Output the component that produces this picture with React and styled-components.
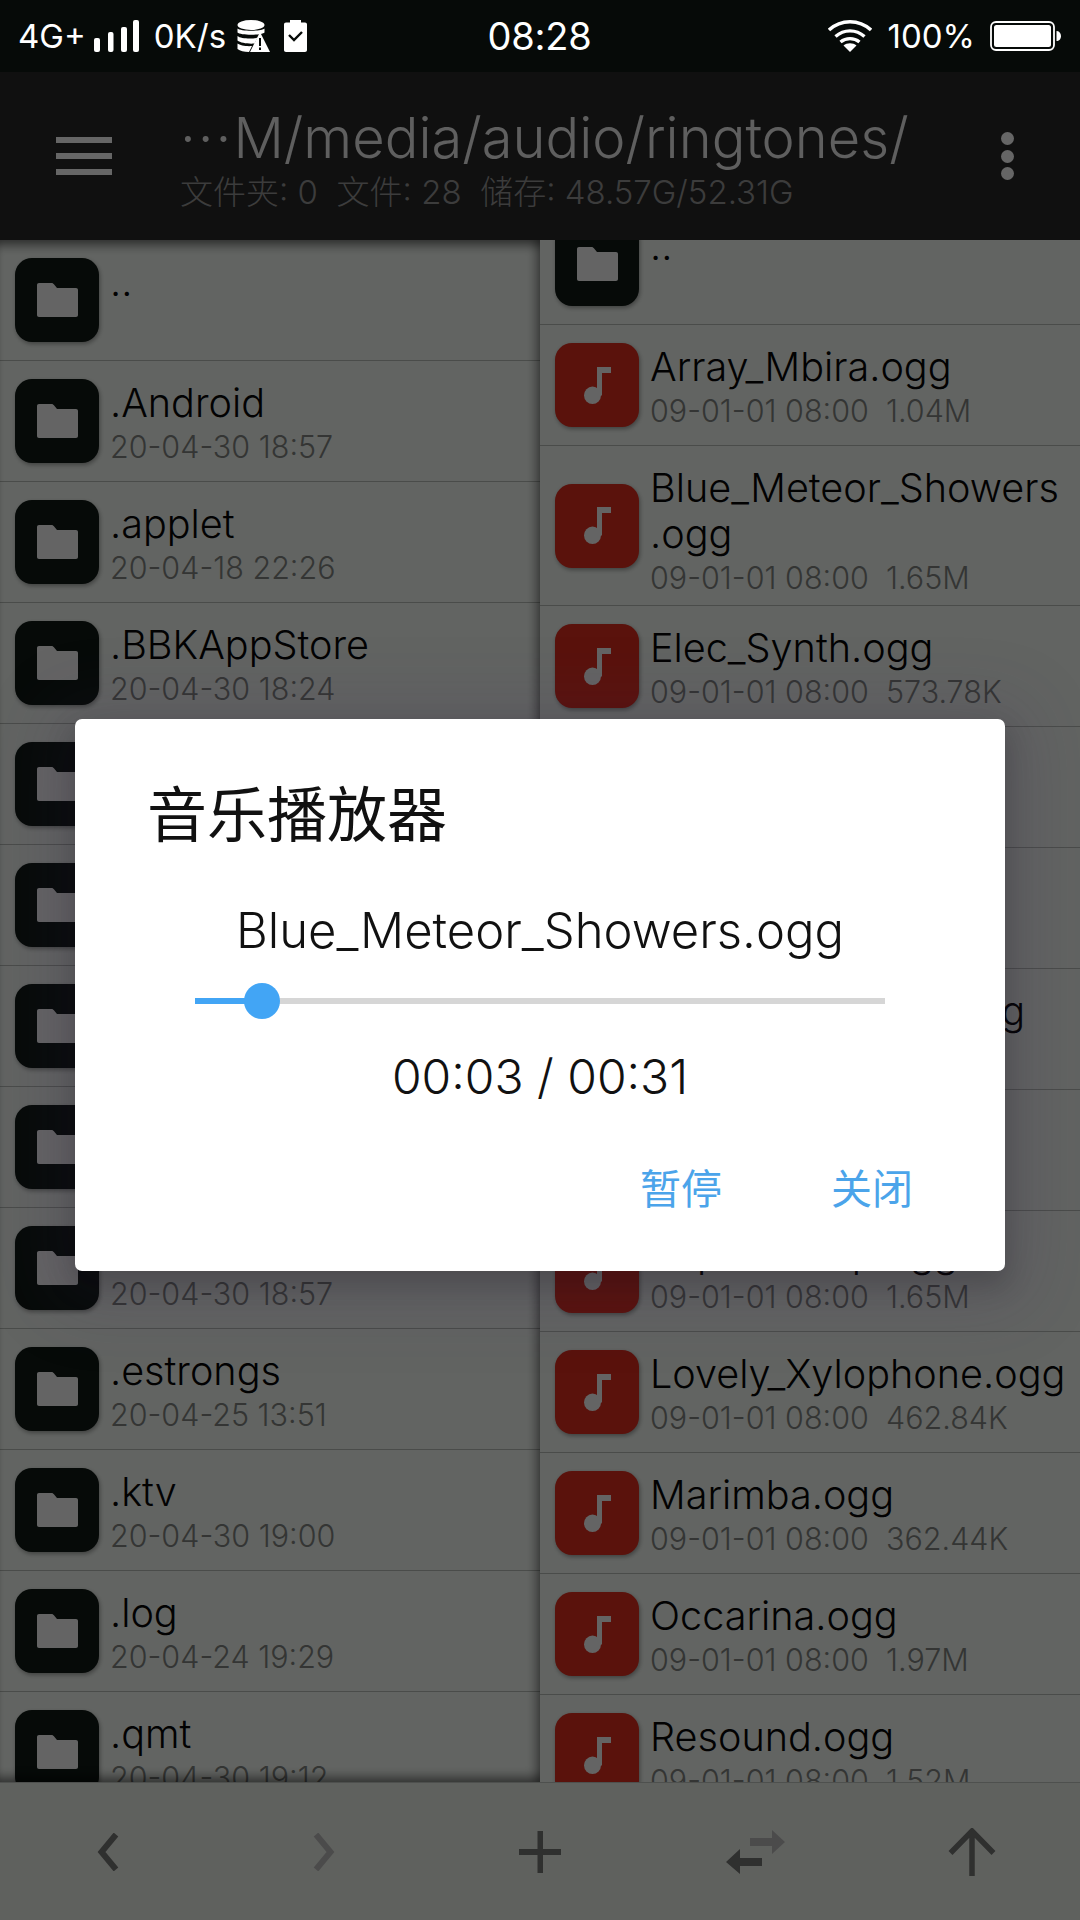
import styled, { createGlobalStyle } from "styled-components";

const GlobalStyle = createGlobalStyle`
  * { box-sizing: border-box; }
  html, body { margin: 0; padding: 0; background: #000; }
  body { font-family: "Inter", "Noto Sans CJK SC", sans-serif; }
`;

const latin = `"Inter", "Noto Sans CJK SC", sans-serif`;
const cjk = `"Noto Sans CJK SC", sans-serif`;

/* Tela */

const Screen = styled.div`
  position: relative;
  width: 1080px;
  height: 1920px;
  display: flex;
  flex-direction: column;
  overflow: hidden;
  background: #f5faf5;
`;

/* Barra de status, fica acima do escurecimento */

const StatusBar = styled.div`
  position: relative;
  z-index: 3;
  height: 72px;
  flex: none;
  display: grid;
  grid-template-columns: 1fr auto 1fr;
  align-items: center;
  padding: 0 19px 0 18px;
  background: #060a08;
  color: #fff;
  font-family: ${latin};
  font-size: 33px;
  font-weight: 400;
`;

const StatusLeft = styled.div`
  display: flex;
  align-items: center;
`;

const StatusRight = styled.div`
  display: flex;
  align-items: center;
  justify-content: flex-end;
`;

const StatusText = styled.span`
  margin-left: ${(p) => p.$left || 0}px;
`;

const Clock = styled.span`
  font-size: 38px;
  letter-spacing: -0.2px;
`;

const StatusIcon = styled.svg`
  display: block;
  flex: none;
  margin-left: ${(p) => p.$left || 0}px;
  fill: #fff;
`;

/* Cabecalho com o caminho */

const Header = styled.header`
  height: 168px;
  flex: none;
  display: flex;
  align-items: center;
  padding: 0 56px;
  background: #282828;
`;

const MenuIcon = styled.div`
  width: 56px;
  height: 38px;
  flex: none;
  display: flex;
  flex-direction: column;
  justify-content: space-between;
  span {
    display: block;
    height: 6px;
    background: #fff;
  }
`;

const PathBlock = styled.div`
  flex: 1;
  margin-left: 68px;
  padding-top: 8px;
`;

const PathTitle = styled.div`
  font-family: ${latin};
  font-size: 56px;
  font-weight: 300;
  line-height: 64px;
  color: #eeeeee;
  white-space: nowrap;
`;

const PathDots = styled.span`
  letter-spacing: 2px;
`;

const PathInfo = styled.div`
  font-family: ${latin};
  font-size: 33px;
  font-weight: 300;
  line-height: 44px;
  color: #969696;
  white-space: pre;
`;

const MoreIcon = styled.div`
  width: 14px;
  height: 48px;
  flex: none;
  margin-right: 9px;
  display: flex;
  flex-direction: column;
  justify-content: space-between;
  span {
    display: block;
    width: 13px;
    height: 13px;
    border-radius: 50%;
    background: #fff;
  }
`;

/* Paineis de arquivos */

const Panels = styled.main`
  flex: 1;
  min-height: 0;
  display: flex;
`;

const Panel = styled.section`
  position: relative;
  flex: none;
  width: ${(p) => p.$width}px;
  overflow: hidden;
`;

const PanelShade = styled.div`
  position: absolute;
  inset: 0;
  pointer-events: none;
  box-shadow: inset -8px 0 8px -3px rgba(0, 0, 0, 0.35), inset 0 12px 10px -6px rgba(0, 0, 0, 0.45),
    inset 0 -12px 10px -6px rgba(0, 0, 0, 0.4);
`;

const List = styled.ul`
  list-style: none;
  margin: ${(p) => p.$offset || 0}px 0 0;
  padding: 0;
`;

const Row = styled.li`
  display: flex;
  align-items: center;
  min-height: 121px;
  padding: 0 6px 0 15px;
  border-bottom: 1px solid #b9beb9;
`;

const IconBox = styled.div`
  width: 84px;
  height: 84px;
  flex: none;
  display: flex;
  align-items: center;
  justify-content: center;
  border-radius: 17px;
  background: ${(p) => p.$color};
  box-shadow: 1px 2px 4px rgba(0, 0, 0, 0.35);
`;

const RowText = styled.div`
  align-self: flex-start;
  min-width: 0;
  margin-left: 11px;
  padding: 19px 0 8px;
  font-family: ${latin};
`;

const RowName = styled.div`
  font-size: 39.6px;
  font-weight: 300;
  line-height: 46px;
  color: #050505;
`;

const RowMeta = styled.div`
  margin-top: 2px;
  font-size: 30.5px;
  font-weight: 300;
  line-height: 38px;
  color: #828682;
  white-space: pre;
`;

/* Barra inferior */

const BottomBar = styled.nav`
  height: 138px;
  flex: none;
  display: grid;
  grid-template-columns: repeat(5, 1fr);
  align-items: center;
  justify-items: center;
  background: #eef2eb;
  border-top: 1px solid #c4c8c4;
`;

/* Escurecimento e dialogo */

const Overlay = styled.div`
  position: absolute;
  inset: 72px 0 0;
  z-index: 2;
  display: flex;
  align-items: center;
  justify-content: center;
  padding-bottom: 2px;
  background: rgba(0, 0, 0, 0.6);
`;

const Dialog = styled.div`
  width: 930px;
  height: 552px;
  display: flex;
  flex-direction: column;
  border-radius: 7px;
  background: #fff;
  box-shadow: 0 12px 26px 4px rgba(0, 0, 0, 0.16), 0 10px 70px 26px rgba(60, 45, 85, 0.16);
`;

const DialogTitle = styled.h2`
  margin: 0;
  padding: 57px 0 0 72px;
  font-family: ${cjk};
  font-size: 60px;
  font-weight: 400;
  line-height: 70px;
  color: #111;
`;

const TrackName = styled.div`
  margin-top: 57px;
  text-align: center;
  font-family: ${latin};
  font-size: 49px;
  font-weight: 300;
  line-height: 56px;
  color: #111;
`;

const Slider = styled.div`
  position: relative;
  align-self: center;
  width: 690px;
  height: 6px;
  margin-top: 39px;
  background: #d6d6d6;
`;

const SliderFill = styled.div`
  height: 100%;
  background: #42a5f5;
`;

const SliderThumb = styled.div`
  position: absolute;
  top: -15px;
  width: 36px;
  height: 36px;
  margin-left: -18px;
  border-radius: 50%;
  background: #42a5f5;
`;

const TrackTime = styled.div`
  margin-top: 45px;
  text-align: center;
  font-family: ${latin};
  font-size: 48px;
  font-weight: 300;
  line-height: 56px;
  color: #111;
`;

const DialogActions = styled.div`
  display: flex;
  justify-content: flex-end;
  gap: 109px;
  margin-top: 53px;
  padding-right: 92px;
`;

const ActionButton = styled.button`
  padding: 0;
  border: 0;
  background: none;
  font-family: ${cjk};
  font-size: 41px;
  line-height: 56px;
  color: #4ba4ea;
`;

const Glyph = styled.svg`
  display: block;
  flex: none;
`;

function FolderGlyph() {
  return (
    <Glyph width="41" height="34" viewBox="0 0 41 34">
      <path
        d="M2 0h12.5c1 0 1.6.4 2.2 1.1L20 5h19c1.2 0 2 .8 2 2v25c0 1.200-.8 2-2 2H2c-1.200 0-2-.8-2-2V2C0 .8.8 0 2 0z"
        fill="#fafafa"
      />
    </Glyph>
  );
}

function NoteGlyph() {
  return (
    <Glyph width="27" height="37" viewBox="0 0 27 37">
      <path d="M13 0h14v6H18v22.500h-5z" fill="#fafafa" />
      <ellipse cx="8.500" cy="28.300" rx="8.500" ry="8.700" fill="#fafafa" />
    </Glyph>
  );
}

const leftFiles = [
  { name: "..", meta: "" },
  { name: ".Android", meta: "20-04-30 18:57" },
  { name: ".applet", meta: "20-04-18 22:26" },
  { name: ".BBKAppStore", meta: "20-04-30 18:24" },
  { name: ".cache", meta: "20-04-29 12:10" },
  { name: ".clouddisk", meta: "20-04-28 09:41" },
  { name: ".config", meta: "20-04-27 16:02" },
  { name: ".dlna", meta: "20-04-26 20:33" },
  { name: ".downloads", meta: "20-04-30 18:57" },
  { name: ".estrongs", meta: "20-04-25 13:51" },
  { name: ".ktv", meta: "20-04-30 19:00" },
  { name: ".log", meta: "20-04-24 19:29" },
  { name: ".qmt", meta: "20-04-30 19:12" },
];

const rightFiles = [
  { name: "..", meta: "", folder: true },
  { name: "Array_Mbira.ogg", meta: "09-01-01 08:00  1.04M" },
  { name: "Blue_Meteor_Showers.ogg", meta: "09-01-01 08:00  1.65M" },
  { name: "Elec_Synth.ogg", meta: "09-01-01 08:00  573.78K" },
  { name: "Flutey_Phone.ogg", meta: "09-01-01 08:00  1.20M" },
  { name: "Free_Flight.ogg", meta: "09-01-01 08:00  1.10M" },
  { name: "Glacial_Grooves.ogg", meta: "09-01-01 08:00  1.32M" },
  { name: "Hojus.ogg", meta: "09-01-01 08:00  0.98M" },
  { name: "Kepler_Drop.ogg", meta: "09-01-01 08:00  1.65M" },
  { name: "Lovely_Xylophone.ogg", meta: "09-01-01 08:00  462.84K" },
  { name: "Marimba.ogg", meta: "09-01-01 08:00  362.44K" },
  { name: "Occarina.ogg", meta: "09-01-01 08:00  1.97M" },
  { name: "Resound.ogg", meta: "09-01-01 08:00  1.52M" },
];

function FileRow({ file, folder }) {
  // quebra de linha so antes da extensao, como no app
  const dot = file.name.lastIndexOf(".");
  return (
    <Row>
      <IconBox $color={folder ? "#0f1914" : "#e12d1e"}>{folder ? <FolderGlyph /> : <NoteGlyph />}</IconBox>
      <RowText>
        <RowName>
          {file.name.slice(0, dot)}
          <wbr />
          {file.name.slice(dot)}
        </RowName>
        <RowMeta>{file.meta || " "}</RowMeta>
      </RowText>
    </Row>
  );
}

export default function App() {
  return (
    <>
      <GlobalStyle />
      <Screen>
        <StatusBar>
          <StatusLeft>
            <StatusText>4G+</StatusText>
            <StatusIcon $left={8} width="45" height="32" viewBox="0 0 45 32">
              <rect x="0" y="18" width="6" height="14" rx="2" />
              <rect x="14" y="12" width="5.500" height="20" rx="2" />
              <rect x="27" y="7" width="6" height="25" rx="2" />
              <rect x="39" y="0" width="6" height="32" rx="2" />
            </StatusIcon>
            <StatusText $left={15}>0K/s</StatusText>
            <StatusIcon $left={11} width="33" height="33" viewBox="0 0 33 33">
              <ellipse cx="14" cy="5" rx="13.500" ry="5" />
              <path d="M.5 8.500c3 3 24 3 27 0v4c-3 3-24 3-27 0zM.5 16c3 3 17 3 20 1.500l-3 6c-6 .5-14-.5-17-3zM.5 23.500c2.500 2 9 3 14.500 2.500l-3 6c-5-.2-9-1-11.500-3z" />
              <path d="M23 12l10 20H13z" />
              <path d="M22 18h2v8h-2zM22 27.500h2v2.500h-2z" fill="#060a08" />
            </StatusIcon>
            <StatusIcon $left={14} width="23" height="32" viewBox="0 0 23 32">
              <path d="M6 0h11v2.500h4c1.200 0 2 .8 2 2V30c0 1.200-.8 2-2 2H2c-1.200 0-2-.8-2-2V4.500c0-1.200.8-2 2-2h4z" />
              <path d="M5 15l5 5 8-8" fill="none" stroke="#060a08" strokeWidth="2.400" />
            </StatusIcon>
          </StatusLeft>
          <Clock>08:28</Clock>
          <StatusRight>
            <StatusIcon width="44" height="32" viewBox="0 0 44 32">
              <path d="M22 32l-6.500-6.500c3.500-3 9.500-3 13 0z" />
              <path d="M1 10C13-1 31-1 43 10M7.500 16.500c8.500-7.500 20.500-7.500 29 0M12.500 22c5.500-4.500 13.500-4.500 19 0" fill="none" stroke="#fff" strokeWidth="3.400" />
            </StatusIcon>
            <StatusText $left={16}>100%</StatusText>
            <StatusIcon $left={15} width="71" height="30" viewBox="0 0 71 30">
              <rect x="1" y="1" width="63" height="28" rx="5" fill="none" stroke="#fff" strokeWidth="1.800" />
              <rect x="4" y="4" width="57" height="22" rx="2.500" />
              <path d="M66.500 10c2.500 0 4.500 2 4.500 5s-2 5-4.500 5z" />
            </StatusIcon>
          </StatusRight>
        </StatusBar>

        <Header>
          <MenuIcon>
            <span />
            <span />
            <span />
          </MenuIcon>
          <PathBlock>
            <PathTitle>
              <PathDots>···</PathDots>M/media/audio/ringtones/
            </PathTitle>
            <PathInfo>文件夹: 0  文件: 28  储存: 48.57G/52.31G</PathInfo>
          </PathBlock>
          <MoreIcon>
            <span />
            <span />
            <span />
          </MoreIcon>
        </Header>

        <Panels>
          <Panel $width={540}>
            <List>
              {leftFiles.map((file) => (
                <FileRow key={file.name} file={file} folder />
              ))}
            </List>
            <PanelShade />
          </Panel>
          <Panel $width={540}>
            <List $offset={-36}>
              {rightFiles.map((file) => (
                <FileRow key={file.name} file={file} folder={file.folder} />
              ))}
            </List>
          </Panel>
        </Panels>

        <BottomBar>
          <Glyph width="24" height="38" viewBox="0 0 24 38">
            <path d="M20 1.500L5.500 19 20 36.500" fill="none" stroke="#767876" strokeWidth="6" />
          </Glyph>
          <Glyph width="24" height="38" viewBox="0 0 24 38">
            <path d="M4 1.500L18.500 19 4 36.500" fill="none" stroke="#bcbcbc" strokeWidth="6" />
          </Glyph>
          <Glyph width="42" height="42" viewBox="0 0 42 42">
            <path d="M18.500 0h5.500v18H42v6H24v18h-5.500V24H0v-6h18.500z" fill="#767876" />
          </Glyph>
          <Glyph width="60" height="44" viewBox="0 0 60 44">
            <path d="M24 8h22V0l13 12-13 12v-8H24z" fill="#bcbcbc" />
            <path d="M36 28H14v-9L0 32l14 12v-8h22z" fill="#767876" />
          </Glyph>
          <Glyph width="48" height="48" viewBox="0 0 48 48">
            <path d="M24 48V3M2.500 25L24 3l21.500 22" fill="none" stroke="#767876" strokeWidth="5.500" />
          </Glyph>
        </BottomBar>

        <Overlay>
          <Dialog>
            <DialogTitle>音乐播放器</DialogTitle>
            <TrackName>Blue_Meteor_Showers.ogg</TrackName>
            <Slider>
              <SliderFill style={{ width: `${(3 / 31) * 100}%` }} />
              <SliderThumb style={{ left: `${(3 / 31) * 100}%` }} />
            </Slider>
            <TrackTime>00:03 / 00:31</TrackTime>
            <DialogActions>
              <ActionButton>暂停</ActionButton>
              <ActionButton>关闭</ActionButton>
            </DialogActions>
          </Dialog>
        </Overlay>
      </Screen>
    </>
  );
}
